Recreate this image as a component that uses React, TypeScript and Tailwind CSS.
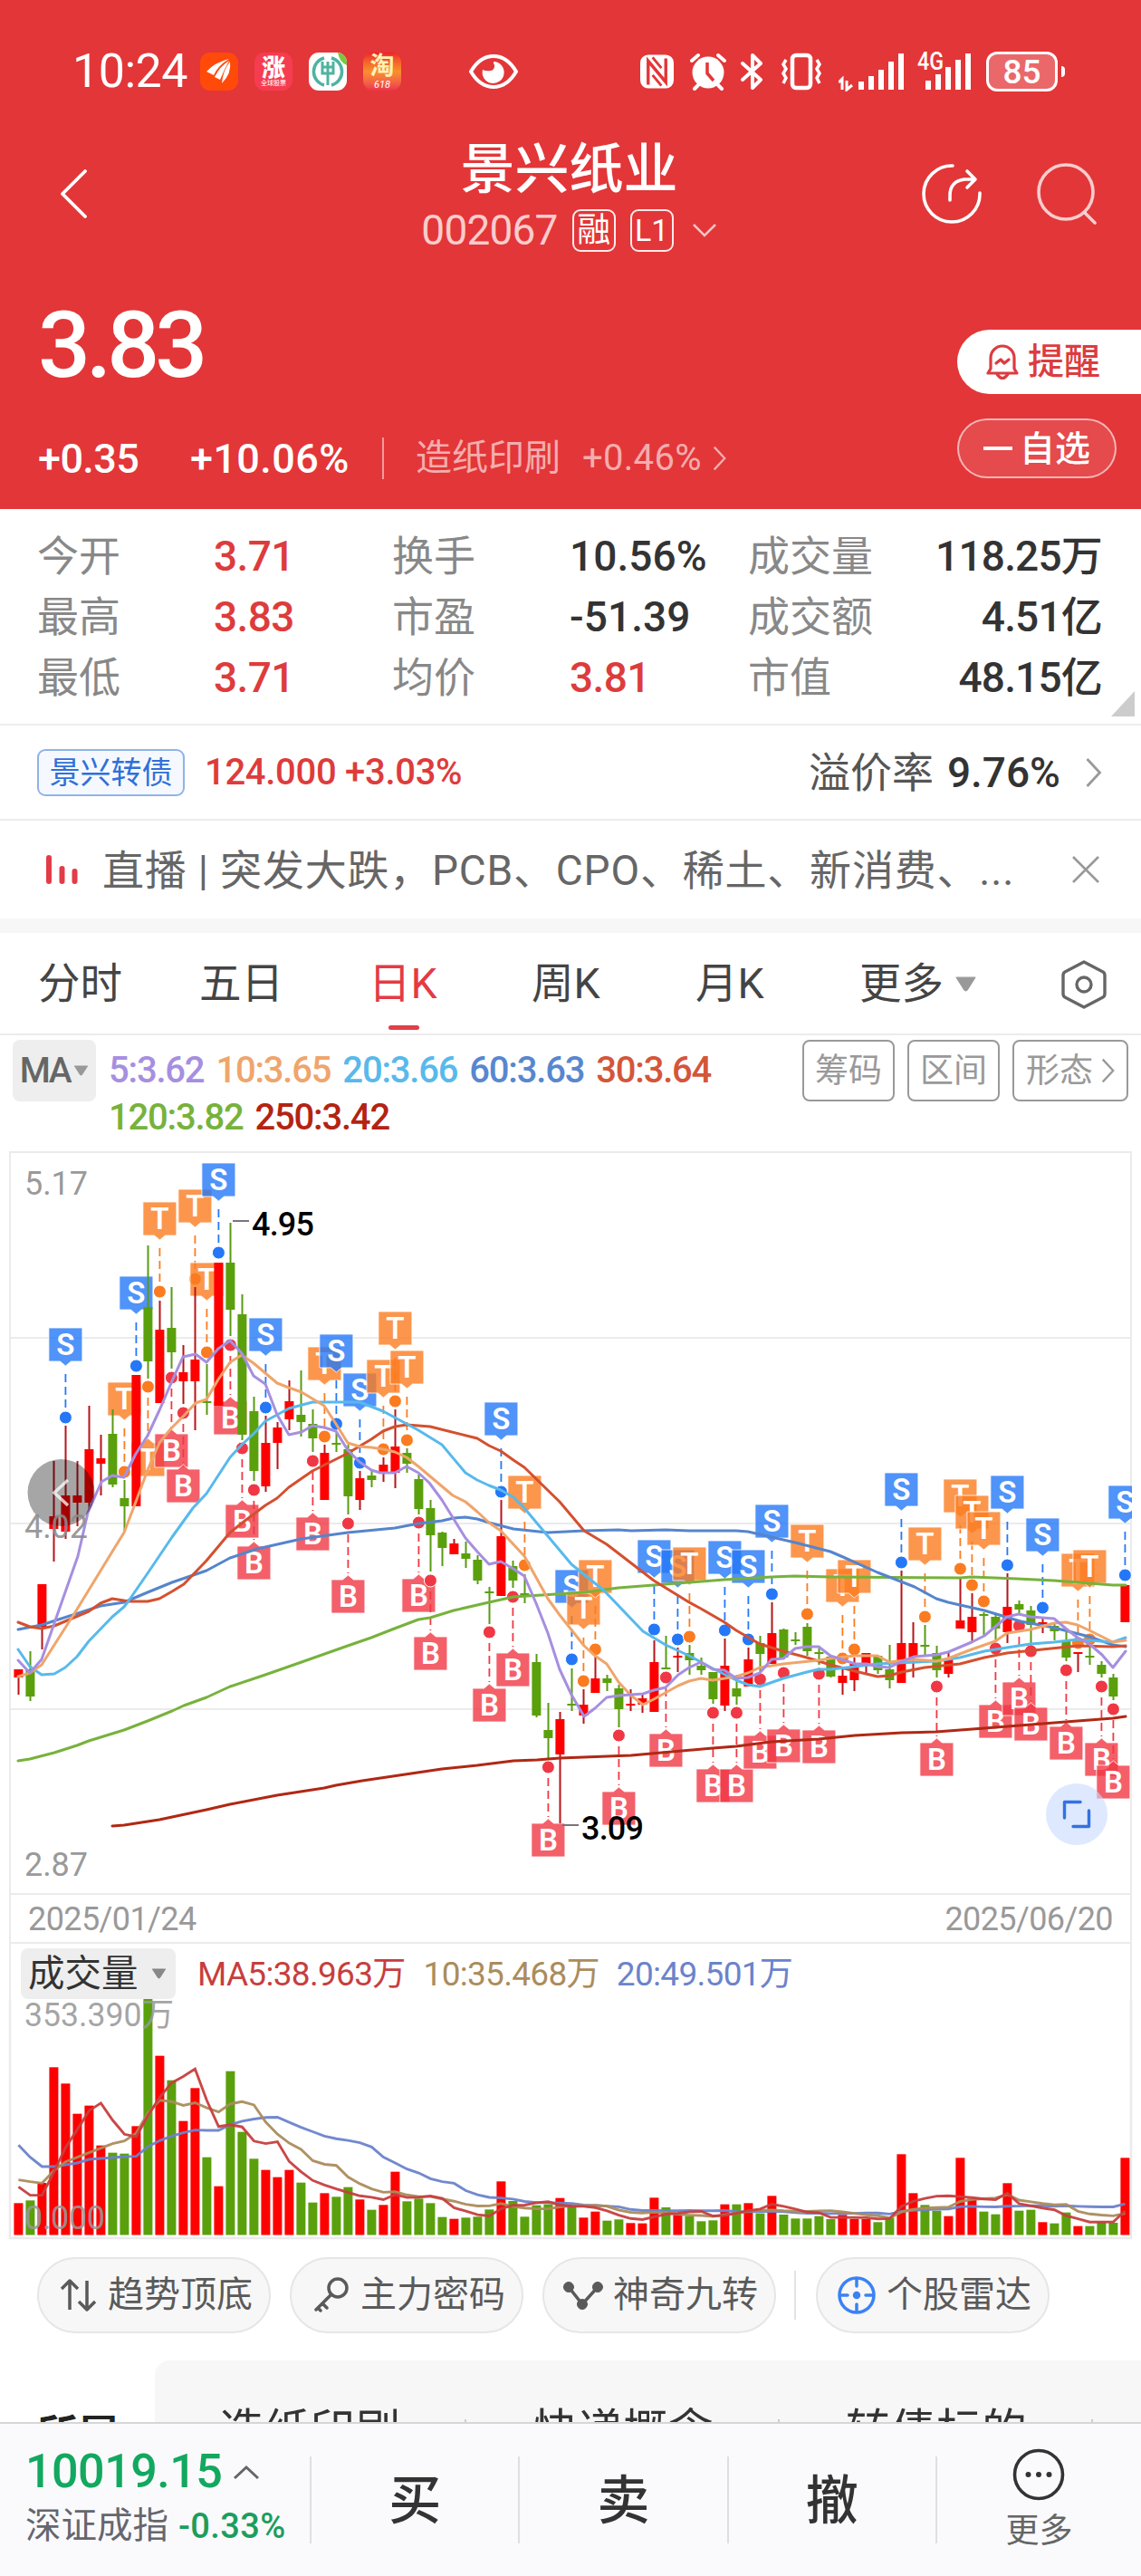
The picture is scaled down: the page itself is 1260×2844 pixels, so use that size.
import type { ReactNode } from 'react';

// [up, high, low, bodyTop, bodyBottom] in panel coordinates
const candles: [number, number, number, number, number][] = [
  [1, 1843, 1871, 1843, 1852], [0, 1823, 1878, 1843, 1873], [1, 1749, 1821, 1749, 1796], [1, 1613, 1724, 1674, 1688],
  [1, 1574, 1699, 1651, 1691], [1, 1613, 1685, 1651, 1659], [1, 1552, 1667, 1600, 1659], [1, 1584, 1651, 1610, 1616],
  [0, 1556, 1642, 1583, 1639], [0, 1634, 1690, 1654, 1663], [1, 1518, 1663, 1518, 1663], [0, 1375, 1522, 1443, 1503],
  [1, 1436, 1549, 1468, 1549], [0, 1421, 1511, 1466, 1493], [1, 1485, 1550, 1515, 1525], [1, 1421, 1579, 1501, 1525],
  [0, 1506, 1562, 1547, 1549], [1, 1394, 1552, 1394, 1552], [0, 1350, 1475, 1394, 1446], [0, 1429, 1590, 1451, 1584],
  [0, 1542, 1635, 1558, 1624], [1, 1563, 1647, 1593, 1641], [1, 1570, 1622, 1576, 1593], [1, 1524, 1579, 1547, 1567],
  [0, 1513, 1586, 1562, 1570], [0, 1556, 1603, 1572, 1588], [1, 1595, 1656, 1604, 1656], [0, 1582, 1603, 1593, 1595],
  [0, 1595, 1672, 1600, 1652], [1, 1624, 1667, 1632, 1656], [0, 1624, 1642, 1629, 1634], [1, 1609, 1636, 1617, 1626],
  [1, 1556, 1643, 1597, 1626], [0, 1599, 1626, 1604, 1616], [0, 1628, 1672, 1633, 1666], [0, 1656, 1735, 1665, 1695],
  [0, 1691, 1729, 1692, 1709], [1, 1699, 1716, 1704, 1716], [0, 1702, 1731, 1715, 1721], [0, 1717, 1749, 1722, 1745],
  [0, 1752, 1793, 1757, 1759], [1, 1656, 1762, 1696, 1762], [0, 1723, 1753, 1729, 1745], [0, 1738, 1770, 1759, 1761],
  [0, 1826, 1896, 1835, 1894], [0, 1880, 1941, 1910, 1919], [1, 1890, 2013, 1898, 1937], [0, 1842, 1889, 1881, 1883],
  [1, 1865, 1903, 1882, 1894], [1, 1829, 1869, 1853, 1869], [0, 1849, 1867, 1853, 1858], [0, 1860, 1907, 1864, 1887],
  [1, 1865, 1889, 1881, 1883], [1, 1870, 1891, 1875, 1882], [1, 1811, 1890, 1835, 1890], [0, 1806, 1842, 1841, 1843],
  [1, 1819, 1846, 1828, 1830], [0, 1816, 1849, 1825, 1833], [0, 1830, 1849, 1839, 1844], [0, 1846, 1881, 1846, 1876],
  [1, 1809, 1889, 1839, 1883], [0, 1849, 1882, 1864, 1873], [1, 1819, 1862, 1832, 1862], [0, 1806, 1847, 1814, 1826],
  [1, 1769, 1837, 1803, 1837], [0, 1798, 1832, 1799, 1830], [0, 1802, 1816, 1810, 1812], [0, 1792, 1828, 1796, 1823],
  [0, 1817, 1838, 1824, 1826], [0, 1828, 1852, 1829, 1851], [1, 1843, 1871, 1850, 1858], [1, 1830, 1867, 1837, 1855],
  [1, 1825, 1848, 1825, 1837], [0, 1827, 1848, 1828, 1844], [0, 1816, 1864, 1843, 1855], [1, 1734, 1858, 1814, 1858],
  [1, 1791, 1852, 1814, 1830], [0, 1794, 1827, 1816, 1818], [0, 1817, 1852, 1825, 1844], [1, 1825, 1852, 1832, 1848],
  [1, 1742, 1798, 1789, 1798], [1, 1759, 1814, 1785, 1802], [0, 1780, 1805, 1782, 1784], [0, 1782, 1813, 1785, 1798],
  [1, 1737, 1814, 1774, 1802], [0, 1767, 1782, 1771, 1777], [0, 1773, 1817, 1778, 1794], [1, 1785, 1803, 1791, 1793],
  [0, 1793, 1811, 1795, 1801], [0, 1802, 1834, 1812, 1830], [1, 1825, 1846, 1824, 1826], [0, 1819, 1838, 1828, 1830],
  [0, 1834, 1852, 1838, 1848], [0, 1848, 1877, 1852, 1873], [1, 1750, 1791, 1750, 1791],
];

type Kind = 'S' | 'T' | 'B';

// [candle index, kind, dot y, flag below the dot]
const signals: [number, Kind, number, boolean?][] = [
  [4, 'S', 1565], [9, 'T', 1625], [10, 'S', 1508], [11, 'T', 1531, true], [12, 'T', 1426], [13, 'B', 1521], [14, 'B', 1560],
  [15, 'T', 1412], [16, 'T', 1493], [17, 'S', 1383], [18, 'B', 1485], [19, 'B', 1599], [20, 'B', 1645], [21, 'S', 1554],
  [25, 'B', 1613], [26, 'T', 1586], [27, 'S', 1572], [28, 'B', 1682], [29, 'S', 1615], [31, 'T', 1600], [32, 'T', 1547],
  [33, 'T', 1590], [34, 'B', 1681], [35, 'B', 1745], [40, 'B', 1802], [41, 'S', 1647], [42, 'B', 1763], [43, 'T', 1728],
  [45, 'B', 1951], [47, 'S', 1832], [48, 'T', 1856], [49, 'T', 1821], [51, 'B', 1916], [54, 'S', 1799], [55, 'B', 1852],
  [56, 'S', 1810], [57, 'T', 1807], [59, 'B', 1891], [60, 'S', 1800], [61, 'B', 1891], [62, 'S', 1810], [63, 'B', 1854],
  [64, 'S', 1760], [65, 'B', 1847], [67, 'T', 1782], [68, 'B', 1848], [70, 'T', 1831], [71, 'T', 1821], [75, 'S', 1725],
  [77, 'T', 1785], [78, 'B', 1862], [80, 'T', 1732], [81, 'T', 1750], [82, 'T', 1768], [83, 'B', 1820], [84, 'S', 1728],
  [85, 'B', 1795], [86, 'B', 1823], [87, 'S', 1775], [89, 'B', 1844], [90, 'T', 1814], [91, 'T', 1810], [92, 'B', 1862],
  [93, 'B', 1887], [94, 'S', 1739],
];

const signalColor: Record<Kind, string> = { S: '#2478f8', T: '#fb7c20', B: '#f03845' };

const maLines = [
  {
    color: '#b02814',
    points:
      '124,2016 137,2015 176,2009 228,1998 254,1992 306,1982 358,1974 371,1971 400,1966 488,1953 527,1949 567,1944 593,1943 618,1941 697,1938 787,1930 813,1928 852,1923 904,1920 944,1916 996,1913 1034,1912 1087,1908 1177,1901 1229,1897 1243,1895',
  },
  {
    color: '#77b23c',
    points:
      '20,1944 33,1942 60,1935 85,1927 98,1922 137,1910 163,1900 190,1889 203,1883 228,1874 254,1862 293,1849 333,1835 384,1817 410,1808 433,1799 462,1788 475,1786 501,1778 540,1769 567,1763 645,1758 683,1753 800,1744 852,1741 878,1740 917,1741 1060,1742 1073,1741 1123,1743 1164,1745 1229,1750 1243,1750',
  },
  {
    color: '#5585cc',
    points:
      '20,1799 46,1794 111,1773 137,1769 163,1758 190,1747 228,1734 254,1720 284,1710 333,1699 384,1692 436,1687 462,1682 488,1679 501,1676 514,1675 527,1677 540,1681 567,1688 605,1692 645,1690 683,1689 697,1690 735,1689 761,1690 813,1690 826,1691 852,1697 878,1703 917,1713 931,1719 969,1736 1010,1752 1034,1765 1047,1769 1087,1778 1127,1790 1164,1797 1203,1807 1229,1816 1243,1818',
  },
  {
    color: '#d4502f',
    points:
      '20,1791 33,1796 46,1798 60,1795 98,1779 111,1770 124,1765 143,1768 163,1768 176,1765 190,1757 203,1749 228,1723 254,1692 273,1677 293,1662 306,1654 319,1642 345,1624 383,1605 410,1589 423,1580 436,1575 449,1573 475,1575 527,1588 540,1596 553,1602 567,1612 579,1620 618,1658 645,1690 670,1705 722,1745 761,1769 774,1776 800,1791 813,1800 839,1815 865,1823 891,1830 917,1838 944,1845 969,1851 982,1850 996,1846 1021,1841 1060,1837 1087,1830 1112,1825 1151,1821 1190,1817 1229,1818 1243,1817',
  },
  {
    color: '#58b9ec',
    points:
      '20,1821 33,1840 46,1849 60,1848 72,1841 85,1829 98,1812 124,1785 137,1774 143,1766 163,1737 190,1697 213,1665 228,1649 254,1609 267,1595 280,1583 293,1569 319,1555 345,1548 397,1548 423,1558 449,1572 462,1579 488,1595 514,1626 527,1634 540,1640 553,1645 567,1653 579,1665 600,1690 631,1727 667,1756 710,1801 735,1816 761,1828 787,1842 813,1855 826,1860 839,1862 865,1853 891,1846 904,1843 917,1843 944,1840 969,1837 1034,1834 1060,1830 1087,1823 1112,1819 1138,1815 1164,1813 1190,1810 1229,1813 1243,1808',
  },
  {
    color: '#efa56b',
    points:
      '20,1851 33,1847 46,1838 60,1816 83,1780 124,1713 137,1692 150,1658 163,1623 176,1593 189,1577 203,1563 216,1549 228,1545 241,1523 254,1504 267,1496 280,1505 306,1527 319,1532 333,1537 358,1552 371,1572 384,1593 397,1597 410,1598 423,1600 436,1603 449,1609 462,1619 475,1630 500,1651 514,1658 527,1669 540,1681 553,1690 579,1718 605,1765 618,1783 645,1817 657,1828 670,1837 683,1857 697,1872 710,1882 722,1876 749,1861 761,1856 774,1853 787,1855 813,1851 826,1847 839,1841 865,1837 904,1833 917,1831 944,1828 969,1828 982,1835 1010,1832 1034,1834 1047,1831 1073,1821 1099,1812 1112,1803 1138,1799 1164,1792 1177,1791 1190,1794 1203,1800 1229,1813 1243,1811',
  },
  {
    color: '#a68fe0',
    points:
      '20,1833 33,1847 46,1832 60,1792 86,1718 97,1670 112,1636 124,1629 137,1631 150,1605 163,1585 176,1557 189,1527 202,1498 216,1495 228,1504 241,1489 254,1480 267,1494 280,1519 293,1528 306,1562 319,1584 333,1581 345,1574 358,1576 371,1580 384,1601 397,1614 410,1623 420,1626 436,1626 449,1619 462,1626 474,1637 488,1656 501,1677 514,1698 527,1713 540,1727 553,1724 567,1732 579,1740 592,1770 605,1803 618,1843 631,1871 645,1895 657,1886 670,1874 683,1872 710,1870 722,1866 735,1863 749,1849 761,1841 774,1835 787,1843 800,1844 813,1853 826,1852 839,1847 852,1832 865,1831 878,1820 891,1818 904,1818 917,1828 944,1837 957,1837 969,1840 982,1841 996,1834 1010,1829 1034,1827 1047,1824 1073,1813 1087,1806 1099,1796 1112,1785 1125,1782 1138,1785 1164,1787 1177,1798 1190,1808 1203,1815 1217,1827 1229,1841 1243,1823',
  },
];

// bar tops, in thirds of a pixel below the volume origin
const volumes = [
  1117, 1108, 1050, 667, 721, 821, 794, 926, 950, 953, 862, 441, 629, 710, 845, 736, 965, 1061, 680, 881, 970, 1007, 1031,
  1007, 1049, 1115, 1084, 1096, 1064, 1105, 1139, 1123, 1013, 1111, 1102, 1117, 1163, 1169, 1165, 1162, 1138, 1045, 1110,
  1162, 1124, 1121, 1100, 1128, 1165, 1145, 1175, 1171, 1183, 1184, 1099, 1131, 1156, 1160, 1177, 1174, 1121, 1121, 1117,
  1151, 1093, 1155, 1168, 1168, 1160, 1170, 1156, 1170, 1170, 1180, 1165, 955, 1084, 1123, 1142, 1160, 967, 1103, 1145,
  1154, 1051, 1142, 1139, 1180, 1184, 1148, 1193, 1193, 1180, 1182, 967,
];

const volumeLines = [
  {
    color: '#6b83cb',
    span: 20,
    lead: [925, 965, 996, 996, 990, 984, 972, 969, 966, 963, 962, 930, 910, 895, 884, 875, 876, 876, 857],
  },
  { color: '#ab8c5c', span: 10, lead: [1040, 1046, 1051, 1010, 980, 965, 950, 935, 920] },
  { color: '#c73e3e', span: 5, lead: [1063, 1091, 1091, 1015] },
];

const cx = (i: number) => 20.4 + i * 13;
const vy = (v: number) => 2060 + v / 3;

function averagePoints(span: number, lead: number[]) {
  return volumes
    .map((_, i) => {
      if (i < lead.length) return `${cx(i)},${vy(lead[i])}`;
      const part = volumes.slice(i - span + 1, i + 1);
      return `${cx(i)},${vy(part.reduce((a, b) => a + b, 0) / span).toFixed(1)}`;
    })
    .join(' ');
}

function Signal({ i, kind, y, below }: { i: number; kind: Kind; y: number; below: boolean }) {
  const x = cx(i);
  const color = signalColor[kind];
  const top = below ? y + 62 : y - 99;
  const flag = below
    ? `M${x - 18.5} ${y + 62}h12.5l6-5l6 5h12.5v37h-37z`
    : `M${x - 18.5} ${y - 99}h37v37h-12.5l-6 5l-6-5h-12.5z`;
  return (
    <g>
      <path d={below ? `M${x} ${y + 12}V${y + 55}` : `M${x} ${y - 48}V${y - 8}`} stroke={color} strokeWidth={1.8} strokeDasharray="9 5" />
      <path d={flag} fill={color} fillOpacity={0.8} stroke="#fff" strokeWidth={1} strokeOpacity={0.8} strokeLinejoin="round" />
      <text x={x} y={top + 30} fill="#fff" fontSize={33} fontWeight={600} textAnchor="middle">
        {kind}
      </text>
      <circle cx={x} cy={y} r={7} fill={color} stroke="#fff" strokeWidth={1} />
    </g>
  );
}

function PriceChart() {
  return (
    <div className="h-[821px]">
      <svg viewBox="0 1271 1260 821" className="block h-full w-full">
        <clipPath id="plot">
          <rect x="10" y="1271" width="1240" height="821" />
        </clipPath>
        <g stroke="#ebebeb" strokeWidth="2" fill="none">
          <path d="M10 1272H1250M11 1477H1249M11 1682H1249M11 1887H1249M11 2091H1249" />
          <path d="M11 1271V2092M1249 1271V2092" />
        </g>
        <g clipPath="url(#plot)">
          {signals.map(([i, kind, y, below]) => (
            <Signal key={i} i={i} kind={kind} y={y} below={below ?? kind === 'B'} />
          ))}
          {candles.map(([up, high, low, top, bottom], i) => (
            <g key={i} fill={up ? '#fe0000' : '#5aa00c'}>
              <rect x={cx(i) - 0.9} y={high} width={2} height={low - high} fill={up ? '#b8141a' : '#5a9a14'} />
              <rect x={cx(i) - 5} y={top} width={10} height={bottom - top} />
            </g>
          ))}
          {maLines.map(({ color, points }) => (
            <polyline key={color} points={points} fill="none" stroke={color} strokeWidth="3" strokeLinejoin="round" strokeLinecap="round" />
          ))}
        </g>
        <g stroke="#777" strokeWidth="2">
          <path d="M257 1348H275M621 2015H639" />
        </g>
        <g fontSize="36" fontWeight="500">
          <text x="278" y="1364" textLength="69">4.95</text>
          <text x="642" y="2031" textLength="69">3.09</text>
        </g>
        <circle cx="67.500" cy="1648" r="37" fill="#000" fillOpacity="0.35" />
        <path d="M75 1634L60 1648L75 1662" fill="none" stroke="#fff" strokeOpacity="0.75" strokeWidth="3.500" />
        <g fontSize="36" fill="#8c8c8c" fillOpacity="0.9">
          <text x="27" y="1319" textLength="70">5.17</text>
          <text x="27" y="1698" textLength="70">4.02</text>
          <text x="27" y="2071" textLength="70">2.87</text>
        </g>
        <circle cx="1189" cy="2003" r="34" fill="#c8daff" fillOpacity="0.6" />
        <path d="M1193 1989.500H1175.500V2007M1202.500 1999V2016.500H1185" fill="none" stroke="#3272e2" strokeWidth="3.400" strokeLinecap="round" strokeLinejoin="round" />
      </svg>
    </div>
  );
}

function VolumeChart() {
  return (
    <svg viewBox="0 2207 1260 266" className="block h-[266px] w-full">
      <path d="M11 2207V2471H1249V2207" fill="none" stroke="#ebebeb" strokeWidth="2.500" />
      {volumes.map((v, i) => (
        <rect key={i} x={cx(i) - 5} y={vy(v)} width={10} height={2467.5 - vy(v)} fill={candles[i][0] ? '#fe0000' : '#5aa00c'} />
      ))}
      {volumeLines.map(({ color, span, lead }) => (
        <polyline key={span} points={averagePoints(span, lead)} fill="none" stroke={color} strokeWidth="2.900" strokeOpacity="0.95" />
      ))}
      <g fontSize="36" fill="#999" fillOpacity="0.9">
        <text x="27" y="2237" textLength="165" lengthAdjust="spacingAndGlyphs">353.390万</text>
        <text x="27" y="2461" textLength="89">0.000</text>
      </g>
    </svg>
  );
}

function Caret({ className }: { className: string }) {
  return (
    <svg viewBox="0 0 20 14" className={className}>
      <path d="M1.500 1H18.500L11.500 12Q10 14 8.500 12Z" fill="currentColor" stroke="currentColor" strokeLinejoin="round" />
    </svg>
  );
}

function Chevron({ className }: { className: string }) {
  return (
    <svg viewBox="0 0 18 34" fill="none" className={className}>
      <path d="M2 2L16 17L2 32" stroke="currentColor" strokeWidth="2.800" />
    </svg>
  );
}

function StatusBar() {
  return (
    <div className="flex h-[146px] items-center pt-3 pr-[84px] pl-[80px]">
      <div className="w-[141px] text-[52px] leading-none tracking-[-0.5px]">10:24</div>
      <div className="flex gap-[18px]">
        <svg viewBox="0 0 42 42" className="size-[42px] rounded-[11px] bg-[#ff4a0a]">
          <path d="M7 21Q16 11 32 7Q20 14 15 25ZM16 27Q22 15 32 9Q27 18 22 30ZM24 34Q25 20 33 10Q35 23 24 34Z" fill="#fff" />
        </svg>
        <div className="flex size-[42px] flex-col items-center justify-center rounded-[11px] bg-[#f63c50]">
          <span className="text-[26px] leading-[26px] font-black">涨</span>
          <span className="text-[7px] leading-[8px]">全球股票</span>
        </div>
        <svg viewBox="0 0 42 42" className="size-[42px] rounded-[11px] bg-white">
          <path d="M32 0H42V14Q34 11 32 0Z" fill="#78c840" />
          <g fill="none" stroke="#4fb3a0">
            <path d="M17 6A15.500 15.500 0 0 0 17 36M25 6A15.500 15.500 0 0 1 25 36" strokeWidth="3.500" />
            <path d="M21 10V36M15 10V23H27V10M15 16H27" strokeWidth="3" />
          </g>
        </svg>
        <div className="flex size-[42px] flex-col items-center rounded-[11px] bg-linear-to-b from-[#f01c28] via-[#f8902c] to-[#f0304c]">
          <span className="text-[27px] leading-[30px] font-bold text-[#fff0b8]">淘</span>
          <span className="text-[11px] leading-[11px] italic">618</span>
        </div>
      </div>
      <svg viewBox="0 0 54 38" className="ml-[75px] h-[38px] w-[54px]">
        <path d="M2 19Q12 2 27 2Q42 2 52 19Q42 36 27 36Q12 36 2 19Z" fill="none" stroke="#fff" strokeWidth="4" />
        <path d="M27 10A5 5 0 0 1 24 18Q19 19 15 17A12 12 0 1 0 27 8Z" fill="#fff" />
      </svg>
      <div className="ml-auto flex items-center gap-4">
        <svg viewBox="0 0 38 40" className="mr-0.5 h-[40px] w-[37px]">
          <rect x="0" y="1" width="38" height="38" rx="9" fill="#fff" />
          <path d="M9 35V8L29 32V5" fill="none" stroke="#e33638" strokeWidth="3.500" />
          <path d="M14 4L24 16M14 24L24 36" stroke="#e33638" strokeWidth="3" />
        </svg>
        <svg viewBox="0 0 40 42" className="h-[42px] w-[40px]">
          <circle cx="20" cy="22" r="17.500" fill="#fff" />
          <path d="M2 9L9 3M38 9L31 3M9 36L5 40M31 36L35 40" stroke="#fff" strokeWidth="4" strokeLinecap="round" />
          <path d="M19 11V23L26 31" fill="none" stroke="#e33638" strokeWidth="3.500" />
        </svg>
        <svg viewBox="0 0 26 42" className="h-[42px] w-[26px]">
          <path d="M2 12L22 30L13 39V3L22 12L2 30" fill="none" stroke="#fff" strokeWidth="4" strokeLinejoin="round" strokeLinecap="round" />
        </svg>
        <svg viewBox="0 0 50 42" className="h-[42px] w-[50px]" fill="none" stroke="#fff">
          <rect x="15" y="3" width="20" height="36" rx="4" strokeWidth="4.500" />
          <path d="M8 8L5 13L8 18L5 23L8 28L5 34M42 8L45 13L42 18L45 23L42 28L45 34" strokeWidth="3.500" />
        </svg>
        <svg viewBox="0 0 72 44" className="h-[44px] w-[72px]" fill="#fff">
          <path d="M4 42V30L0 34M9 32V42L15 37" fill="none" stroke="#fff" strokeWidth="3" />
          <path d="M22 33h6v9h-6zM33 27h6v15h-6zM44 20h6v22h-6zM55 11h6v31h-6zM66 2h6v40h-6z" />
        </svg>
        <svg viewBox="0 0 59 44" className="h-[44px] w-[59px] overflow-visible" fill="#fff">
          <text x="-1" y="20" fontSize="27" fontWeight="500" textLength="29" lengthAdjust="spacingAndGlyphs">4G</text>
          <path d="M8 32h6v10h-6zM19 25h6v17h-6zM30 17h6v25h-6zM41 9h6v33h-6zM52 2h6v40h-6z" />
        </svg>
        <div className="flex items-center gap-1">
          <div className="flex h-[44px] w-[79px] items-center justify-center rounded-[12px] border-[3px] border-white bg-white/25 text-[37px] leading-none font-medium">
            85
          </div>
          <div className="h-3 w-1 rounded-r bg-white" />
        </div>
      </div>
    </div>
  );
}

function Header() {
  return (
    <header className="h-[562px] bg-[#e33638] text-white">
      <StatusBar />
      <nav className="grid h-[135px] grid-cols-[1fr_auto_1fr] items-center">
        <svg viewBox="0 0 30 54" className="ml-[66px] h-[54px] w-[30px]">
          <path d="M28 2L3 27L28 52" fill="none" stroke="#fff" strokeWidth="3.800" strokeLinecap="round" strokeLinejoin="round" />
        </svg>
        <div className="-ml-[3px] flex flex-col items-center gap-[7px] pt-[4px]">
          <h1 className="text-[60px] leading-[70px] font-medium">景兴纸业</h1>
          <div className="flex h-[48px] items-center gap-4">
            <span className="text-[46px] leading-none tracking-[-0.8px] text-white/75">002067</span>
            <span className="flex h-[47px] w-[48px] items-center justify-center rounded-[9px] border-2 border-white/90 text-[37px] leading-none">
              融
            </span>
            <span className="flex h-[47px] w-[48px] items-center justify-center rounded-[9px] border-2 border-white/90 text-[34px] leading-none">
              L1
            </span>
            <svg viewBox="0 0 28 16" className="ml-1 h-4 w-7">
              <path d="M2 2L14 14L26 2" fill="none" stroke="#fff" strokeOpacity="0.7" strokeWidth="2.500" />
            </svg>
          </div>
        </div>
        <div className="flex items-center justify-end gap-[61px] pr-[49px]">
          <svg viewBox="0 0 66 68" className="h-[68px] w-[66px]" fill="none" stroke="#fff" strokeWidth="3.600" strokeLinecap="round" strokeLinejoin="round">
            <path d="M34 3A31 31 0 1 0 64 33" />
            <path d="M31 41V36Q31 20 47 18H58M50 9L59 18L50 27" />
          </svg>
          <svg viewBox="0 0 66 68" className="h-[68px] w-[66px]" fill="none" stroke="#fff" strokeOpacity="0.75" strokeWidth="3.600" strokeLinecap="round">
            <circle cx="32" cy="32" r="30" />
            <path d="M54 56L64 66" />
          </svg>
        </div>
      </nav>
      <div className="flex justify-between">
        <div className="pl-[42px]">
          <div className="mt-[50px] h-[100px] text-[102px] leading-[100px] font-medium tracking-[-5px]">3.83</div>
          <div className="mt-[50px] flex h-[50px] items-center text-[45px] leading-none">
            <span className="w-[168px] font-medium tracking-[-0.6px]">+0.35</span>
            <span className="w-[212px] font-medium tracking-[0.4px]">+10.06%</span>
            <span className="h-[46px] w-[2px] bg-white/50" />
            <span className="ml-[35px] text-[40px] text-white/60">造纸印刷</span>
            <span className="ml-6 text-[40px] tracking-[0.3px] text-white/60">+0.46%</span>
            <Chevron className="ml-3 h-[28px] w-[15px] text-white/60" />
          </div>
        </div>
        <div className="flex w-[203px] flex-col pt-[83px]">
          <button className="flex h-[71px] items-center gap-[10px] rounded-l-full bg-white pl-[32px] text-[40px] leading-none font-medium text-[#dc3c40]">
            <svg viewBox="0 0 36 40" className="h-[40px] w-[36px]" fill="none" stroke="currentColor" strokeWidth="3.200" strokeLinejoin="round" strokeLinecap="round">
              <path d="M2 32H34L31 27V15A13 13 0 0 0 5 15V27ZM12 33Q18 42 24 33" />
              <path d="M11 21L16 17L20 21L25 17" />
            </svg>
            提醒
          </button>
          <button className="mt-[27px] flex h-[66px] w-[176px] items-center justify-center gap-[8px] rounded-full border-2 border-white/60 bg-white/10 text-[39px] leading-none font-medium">
            <span className="h-[3.500px] w-[32px] bg-white" />
            <span className="pt-[2px]">自选</span>
          </button>
        </div>
      </div>
    </header>
  );
}

const quotes = [
  ['今开', '3.71', true, '换手', '10.56%', false, '成交量', '118.25万'],
  ['最高', '3.83', true, '市盈', '-51.39', false, '成交额', '4.51亿'],
  ['最低', '3.71', true, '均价', '3.81', true, '市值', '48.15亿'],
] as const;

function QuoteGrid() {
  return (
    <section className="relative h-[237px] pt-[19px] pr-[43px] pl-[41px] text-[46px] leading-[67px] text-[#333]">
      {quotes.map(([a, av, ared, b, bv, bred, c, cv]) => (
        <div key={a} className="flex h-[67px] tracking-[-0.6px]">
          <span className="w-[195px] tracking-normal text-[#888]">{a}</span>
          <span className={ared ? 'w-[197px] font-medium text-[#dd3c3c]' : 'w-[197px]'}>{av}</span>
          <span className="w-[196px] tracking-normal text-[#888]">{b}</span>
          <span className={bred ? 'w-[197px] font-medium text-[#dd3c3c]' : 'w-[197px] font-medium tracking-[0.1px]'}>{bv}</span>
          <span className="tracking-normal text-[#888]">{c}</span>
          <span className="ml-auto font-medium tracking-[-0.8px]">{cv}</span>
        </div>
      ))}
      <svg viewBox="0 0 26 28" className="absolute right-[7px] bottom-[8px] h-7 w-[26px]">
        <path d="M26 0V28H0Z" fill="#ccc" />
      </svg>
    </section>
  );
}

const tabs = [
  { label: '分时', className: 'w-[178px]' },
  { label: '五日', className: 'w-[187px]' },
  { label: '日K', className: 'w-[180px] text-[#e33b44]', active: true },
  { label: '周K', className: 'w-[181px]' },
  { label: '月K', className: 'w-[181px]' },
];

const averages = [
  [
    { text: '5:3.62', color: 'text-[#a68fe0]' },
    { text: '10:3.65', color: 'text-[#efa56b]' },
    { text: '20:3.66', color: 'text-[#58b9ec]' },
    { text: '60:3.63', color: 'text-[#5887cf]' },
    { text: '30:3.64', color: 'text-[#d4563a]' },
  ],
  [
    { text: '120:3.82', color: 'text-[#77b23c]' },
    { text: '250:3.42', color: 'text-[#b42312]' },
  ],
];

function ToolPill({ label, children }: { label: string; children: ReactNode }) {
  return (
    <button className="flex h-[84px] w-[258px] items-center gap-[11px] rounded-full border-2 border-[#e6e6e6] bg-[#f7f7f7] pl-[21px] text-[40px] leading-none whitespace-nowrap text-[#5a5a5a]">
      <svg viewBox="0 0 44 44" className="size-[44px] shrink-0" fill="none" stroke="currentColor" strokeWidth="3.500" strokeLinecap="round" strokeLinejoin="round">
        {children}
      </svg>
      {label}
    </button>
  );
}

function BottomBar() {
  return (
    <footer className="flex h-[170px] border-t-2 border-[#d6d6d9] bg-[#fafafc]">
      <div className="w-[342px] pt-[28px] pl-[28px]">
        <div className="flex h-[50px] items-center gap-3 text-[52px] leading-none tracking-[-0.5px] text-[#12a860]">
          <span className="font-medium">10019.15</span>
          <svg viewBox="0 0 30 17" className="h-[17px] w-[30px]">
            <path d="M2 15L15 3L28 15" fill="none" stroke="#666" strokeWidth="3" />
          </svg>
        </div>
        <div className="mt-[11px] flex h-[48px] items-center gap-[11px] whitespace-nowrap text-[39.500px] leading-none text-[#66666e]">
          深证成指 <span className="text-[38px] font-medium tracking-[0.4px] text-[#1b9e5e]">-0.33%</span>
        </div>
      </div>
      {['买', '卖', '撤'].map((label) => (
        <div key={label} className="flex w-[230.300px] items-center">
          <span className="h-[96px] w-[2px] bg-[#dfdfe2]" />
          <span className="flex-1 pt-[2px] text-center text-[58px] leading-none font-medium text-[#333]">{label}</span>
        </div>
      ))}
      <div className="flex flex-1 items-center">
        <span className="h-[96px] w-[2px] bg-[#dfdfe2]" />
        <div className="flex flex-1 flex-col items-center gap-3 text-[37px] leading-[44px] text-[#666]">
          <svg viewBox="0 0 58 58" className="size-[58px]" fill="#333">
            <circle cx="29" cy="29" r="26.500" fill="none" stroke="#333" strokeWidth="3.600" />
            <circle cx="17.500" cy="29" r="3" />
            <circle cx="29" cy="29" r="3" />
            <circle cx="40.500" cy="29" r="3" />
          </svg>
          更多
        </div>
      </div>
    </footer>
  );
}

export default function App() {
  return (
    <div
      lang="zh-CN"
      className="flex h-[2844px] w-[1260px] flex-col overflow-hidden bg-white font-['Roboto','Noto_Sans_CJK_SC',sans-serif]"
    >
      <Header />
      <QuoteGrid />

      <section className="flex h-[105px] items-center border-t-2 border-[#ededed] pr-[43px] pl-[41px] leading-none">
        <span className="flex h-[52px] w-[163px] items-center justify-center rounded-[9px] border-2 border-[#8fb3e8] bg-[#f5f9ff] text-[34px] text-[#2f70d8]">
          景兴转债
        </span>
        <span className="ml-[22px] text-[40px] font-medium tracking-[-0.3px] text-[#dd3c3c]">124.000 +3.03%</span>
        <span className="ml-auto text-[46px] text-[#555]">溢价率</span>
        <span className="ml-[15px] text-[46px] font-medium text-[#333]">9.76%</span>
        <Chevron className="ml-[27px] h-[34px] w-[19px] text-[#999]" />
      </section>

      <section className="flex h-[110px] items-center border-t-2 border-[#ededed] pr-[46px] pl-[51px]">
        <svg viewBox="0 0 35 32" className="h-[32px] w-[35px]">
          <path d="M3 3V29M17.500 15V29M31.500 18V29" stroke="#e23c48" strokeWidth="6" strokeLinecap="round" />
        </svg>
        <span className="ml-[27px] pt-[2px] text-[46px] leading-none tracking-[0.800px] whitespace-nowrap text-[#666]">
          直播 | 突发大跌，PCB、CPO、稀土、新消费、...
        </span>
        <svg viewBox="0 0 30 30" className="ml-auto size-[30px]">
          <path d="M1 1L29 29M29 1L1 29" stroke="#999" strokeWidth="2.600" />
        </svg>
      </section>

      <div className="h-[16px] bg-[#f7f7f7]" />

      <nav className="flex h-[113px] items-center border-b-2 border-[#ebebeb] pt-[2px] pl-[42px] text-[46.500px] leading-none text-[#444]">
        {tabs.map(({ label, className, active }) => (
          <div key={label} className={className}>
            <span className="relative inline-block">
              {label}
              {active && <i className="absolute -bottom-[27px] left-[22px] h-[5px] w-[34px] rounded-full bg-[#e04048]" />}
            </span>
          </div>
        ))}
        <span>更多</span>
        <Caret className="ml-3 h-[17px] w-[25px] text-[#999]" />
        <svg viewBox="0 0 50 54" className="mr-[38px] ml-auto h-[54px] w-[50px]" fill="none" stroke="#666" strokeWidth="3.400" strokeLinejoin="round">
          <path d="M25 2L46 13Q48 14 48 17V37Q48 40 46 41L25 52L4 41Q2 40 2 37V17Q2 14 4 13Z" />
          <circle cx="25" cy="27" r="8" />
        </svg>
      </nav>

      <section className="flex h-[128px] items-start pt-[5px] pr-[14px] pl-[14px]">
        <button className="flex h-[68px] w-[92px] items-center justify-center gap-1 rounded-[8px] bg-[#eee] text-[39px] leading-none font-medium tracking-[-2.500px] text-[#666]">
          MA
          <Caret className="h-[12px] w-[17px] text-[#999]" />
        </button>
        <div className="ml-[14px] pt-[8px] text-[40px] leading-[52px] font-medium tracking-[-1.200px]">
          {averages.map((row, r) => (
            <div key={r} className="flex gap-[13px]">
              {row.map(({ text, color }) => (
                <span key={text} className={color}>
                  {text}
                </span>
              ))}
            </div>
          ))}
        </div>
        <div className="ml-auto flex gap-[14px] text-[37px] leading-none text-[#999]">
          <span className="flex h-[68px] w-[102px] items-center justify-center rounded-[8px] border-2 border-[#999]">筹码</span>
          <span className="flex h-[68px] w-[102px] items-center justify-center rounded-[8px] border-2 border-[#999]">区间</span>
          <span className="flex h-[68px] w-[128px] items-center justify-center gap-[9px] rounded-[8px] border-2 border-[#999]">
            形态
            <Chevron className="h-[28px] w-[15px]" />
          </span>
        </div>
      </section>

      <PriceChart />

      <div className="mx-[10px] flex h-[54px] items-center justify-between border-x-2 border-b-2 border-[#ebebeb] px-[19px] pt-[2px] text-[36px] leading-none tracking-[-0.600px] text-[#999]">
        <span>2025/01/24</span>
        <span>2025/06/20</span>
      </div>

      <div className="mx-[10px] flex h-[61px] items-center border-x-2 border-[#ebebeb] pt-[5px] pl-[11px] text-[37px] leading-none tracking-[-0.700px]">
        <span className="flex h-[56px] w-[171px] items-center gap-[14px] rounded-[8px] bg-[#eee] pl-[8px] text-[40.500px] tracking-normal text-[#333]">
          成交量
          <Caret className="h-[12px] w-[17px] text-[#888]" />
        </span>
        <span className="ml-[24px] text-[#c73e3e]">MA5:38.963万</span>
        <span className="ml-[20px] text-[#ab8c5c]">10:35.468万</span>
        <span className="ml-[19px] text-[#6b83cb]">20:49.501万</span>
      </div>

      <VolumeChart />

      <div className="flex items-center pt-[19px] pl-[41px]">
        <div className="flex gap-[21px]">
          <ToolPill label="趋势顶底">
            <path d="M13 38V6M4 15L13 6L22 15M32 6V38M23 29L32 38L41 29" strokeLinecap="butt" />
          </ToolPill>
          <ToolPill label="主力密码">
            <circle cx="30" cy="14" r="10" />
            <path d="M23 21L6 38M13 31L18 36M8 36L11 39" />
          </ToolPill>
          <ToolPill label="神奇九转">
            <path d="M6 13L21 32L38 13" />
            <g fill="currentColor" strokeWidth="1">
              <circle cx="6" cy="13" r="5.500" />
              <circle cx="21" cy="32" r="5.500" />
              <circle cx="38" cy="13" r="5.500" />
            </g>
          </ToolPill>
        </div>
        <span className="mr-[22px] ml-[20px] h-[54px] w-[2px] bg-[#e3e3e3]" />
        <ToolPill label="个股雷达">
          <g className="text-[#3b82f6]" stroke="currentColor">
            <circle cx="22" cy="22" r="19" />
            <path d="M22 4V12M22 32V40M4 22H12M32 22H40" />
            <circle cx="22" cy="22" r="2.500" fill="currentColor" />
          </g>
        </ToolPill>
      </div>

      <div className="mt-[30px] flex h-[68px] overflow-hidden">
        <div className="w-[171px] pt-[57px] pl-[41px] text-[45px] leading-[52px] font-bold text-[#222]">所属</div>
        <div className="flex flex-1 items-start rounded-tl-[16px] bg-[#f7f7f7] pt-[48px] text-[50px] leading-[60px] whitespace-nowrap text-[#333]">
          {['造纸印刷', '快递概念', '转债标的'].map((label) => (
            <div key={label} className="flex w-[346px] shrink-0">
              <span className="w-[342px] text-center">{label}</span>
              <span className="mt-[17px] h-6 w-[2px] bg-[#ccc]" />
            </div>
          ))}
        </div>
      </div>

      <BottomBar />
    </div>
  );
}
